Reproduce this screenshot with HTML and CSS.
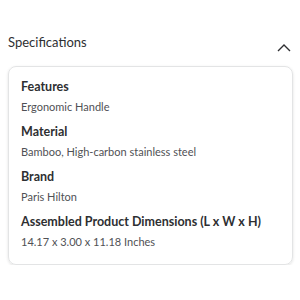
FILE: index.html
```html
<!DOCTYPE html>
<html>
<head>
<meta charset="utf-8">
<link rel="stylesheet" href="styles.css">
</head>
<body>
<section class="specs">
  <div class="specs-header">
    <h2 class="specs-title">Specifications</h2>
    <svg class="chevron" width="14" height="9" viewBox="0 0 14 9"><path d="M1 8 L7 2 L13 8" fill="none" stroke="#2e2f32" stroke-width="1.4"/></svg>
  </div>
  <div class="specs-card">
    <div class="spec">
      <h3 class="spec-name">Features</h3>
      <p class="spec-value">Ergonomic Handle</p>
    </div>
    <div class="spec">
      <h3 class="spec-name">Material</h3>
      <p class="spec-value">Bamboo, High-carbon stainless steel</p>
    </div>
    <div class="spec">
      <h3 class="spec-name">Brand</h3>
      <p class="spec-value">Paris Hilton</p>
    </div>
    <div class="spec">
      <h3 class="spec-name">Assembled Product Dimensions (L x W x H)</h3>
      <p class="spec-value">14.17 x 3.00 x 11.18 Inches</p>
    </div>
  </div>
</section>
</body>
</html>
```
FILE: styles.css
```css
html, body {
  margin: 0;
  padding: 0;
  background: #ffffff;
}
body {
  font-family: Lato, "Open Sans", sans-serif;
  color: #2e2f32;
}
.specs {
  padding: 0 7px 0 8px;
}
.specs-header {
  display: flex;
  align-items: center;
  justify-content: space-between;
  padding-top: 31px;
  height: 22px;
}
.specs-title {
  margin: 0;
  font-size: 13px;
  font-weight: 400;
  line-height: 18px;
}
.chevron {
  margin-right: 2px;
  margin-top: 11px;
}
.specs-card {
  margin-top: 13px;
  border: 1px solid #e3e4e5;
  border-radius: 8px;
  box-shadow: 0 1px 3px rgba(0,0,0,0.12);
  padding: 12px 12px 15px;
}
.spec + .spec {
  margin-top: 10px;
}
.spec-name {
  margin: 0;
  font-size: 12.5px;
  font-weight: 700;
  line-height: 16px;
}
.spec-value {
  margin: 5px 0 0;
  font-size: 11px;
  line-height: 14px;
  color: #505155;
}
```
